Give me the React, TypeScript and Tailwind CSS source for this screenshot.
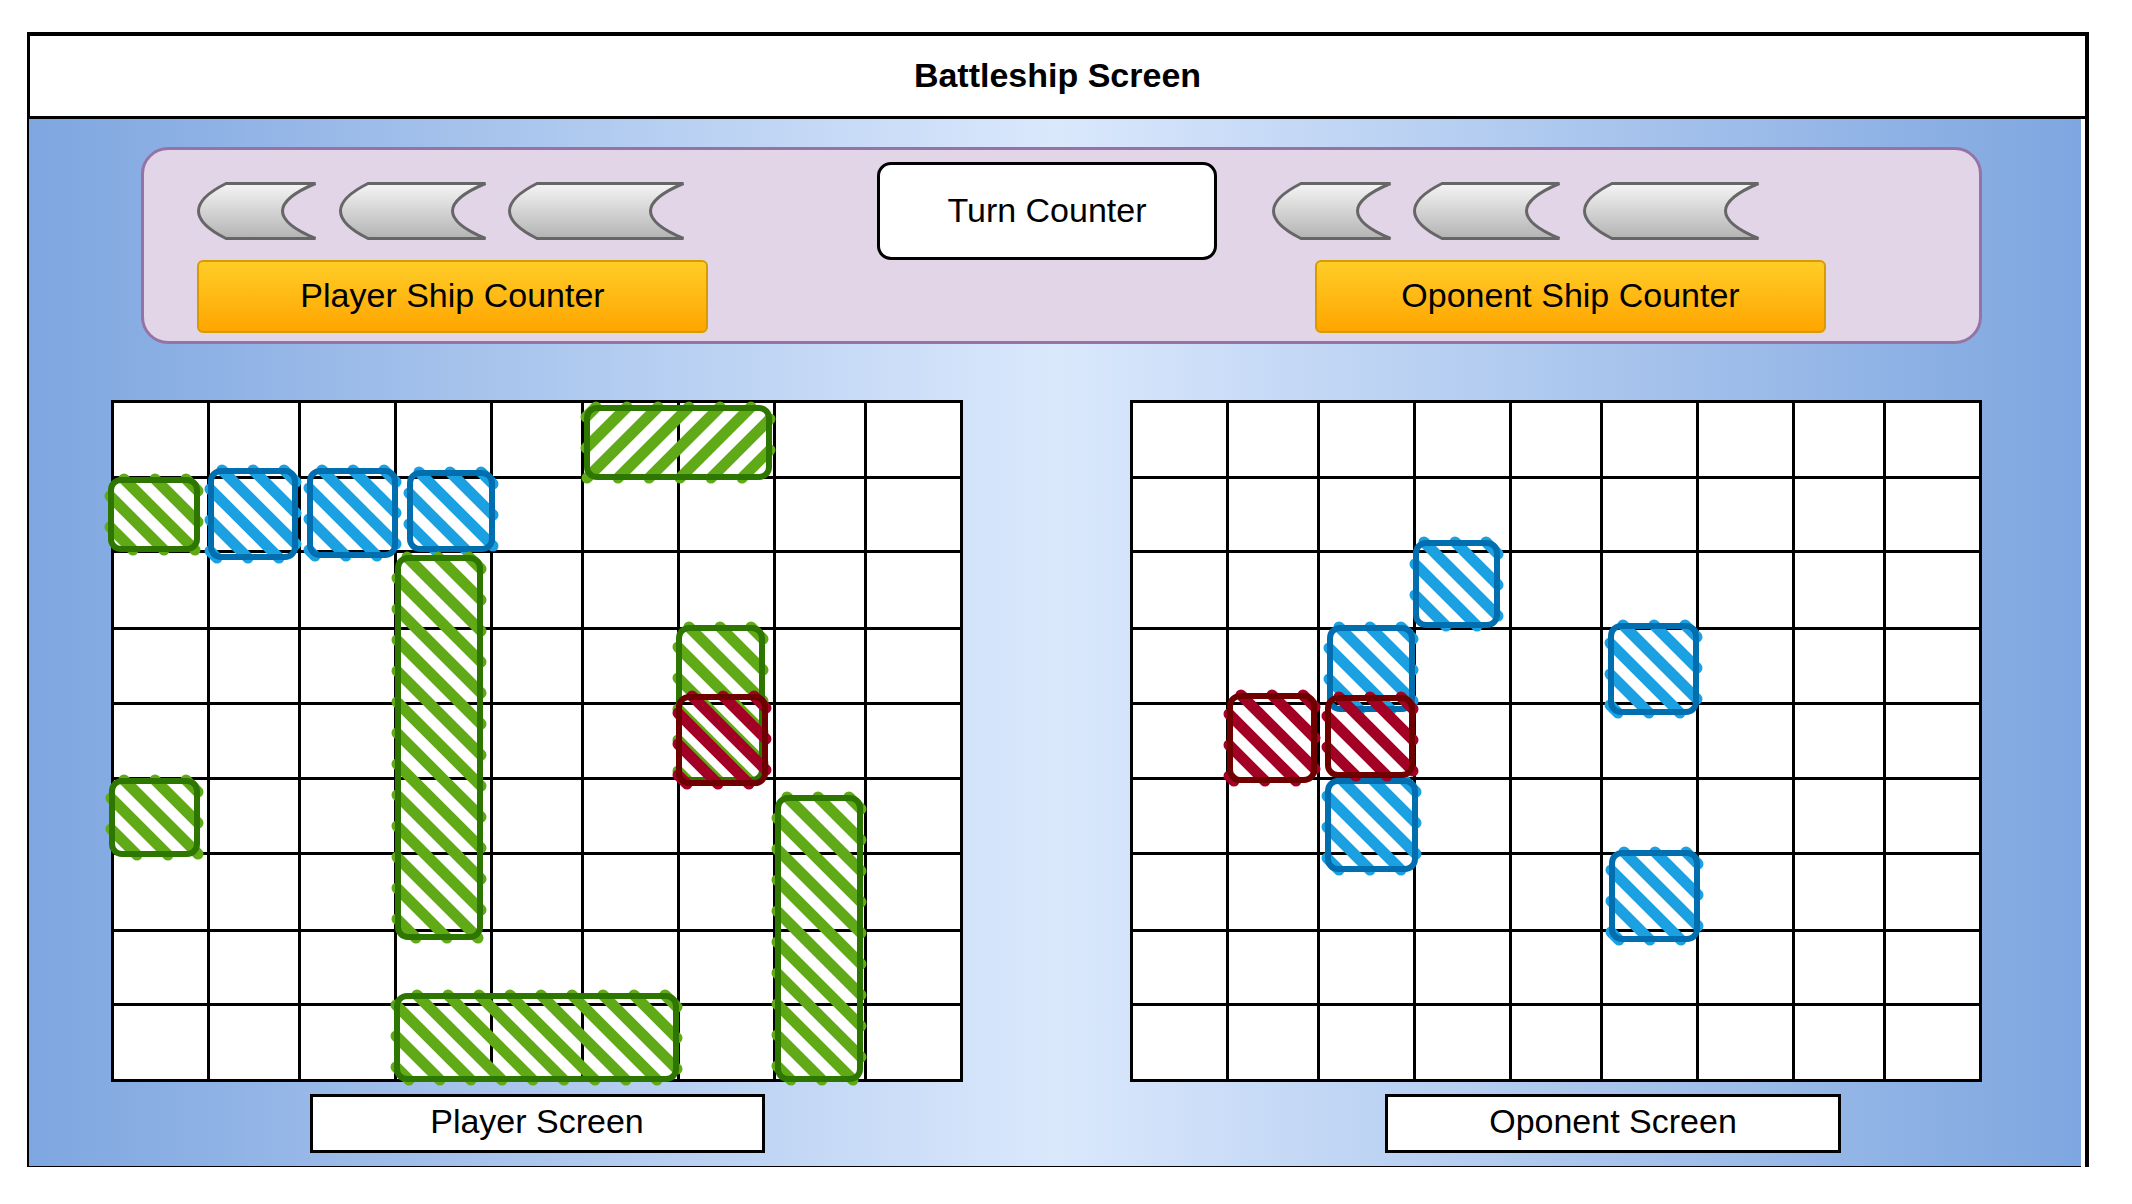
import React, { useId } from "react";

type Mark = { x: number; y: number; w: number; h: number; c: "g" | "b" | "r"; dir?: "f" | "b" };

const COLORS = {
  g: { fill: "#60a917", stroke: "#2d7600" },
  b: { fill: "#1ba1e2", stroke: "#006eaf" },
  r: { fill: "#a20025", stroke: "#6f0000" },
};

const playerMarks: Mark[] = [
  { x: 473, y: 5, w: 188, h: 75, c: "g", dir: "f" },
  { x: -3, y: 77, w: 92, h: 75, c: "g" },
  { x: 97, y: 68, w: 90, h: 92, c: "b" },
  { x: 196, y: 68, w: 91, h: 90, c: "b" },
  { x: 296, y: 70, w: 88, h: 82, c: "b" },
  { x: 284, y: 155, w: 88, h: 385, c: "g" },
  { x: 565, y: 225, w: 89, h: 158, c: "g" },
  { x: 565, y: 294, w: 92, h: 92, c: "r" },
  { x: -2, y: 378, w: 91, h: 79, c: "g" },
  { x: 664, y: 395, w: 88, h: 287, c: "g" },
  { x: 283, y: 593, w: 285, h: 89, c: "g" },
];

const opponentMarks: Mark[] = [
  { x: 283, y: 140, w: 87, h: 88, c: "b" },
  { x: 197, y: 225, w: 88, h: 87, c: "b" },
  { x: 478, y: 223, w: 91, h: 92, c: "b" },
  { x: 195, y: 378, w: 93, h: 94, c: "b" },
  { x: 97, y: 293, w: 90, h: 90, c: "r" },
  { x: 195, y: 295, w: 90, h: 83, c: "r" },
  { x: 479, y: 450, w: 91, h: 92, c: "b" },
];

function Hatch({ m }: { m: Mark }) {
  const { w, h } = m;
  const col = COLORS[m.c];
  const step = 31;
  const ins = 2;
  const iw = w - ins * 2;
  const ih = h - ins * 2;
  const lines: number[][] = [];
  if (m.dir === "f") {
    for (let c = 10; c < iw + ih; c += step) {
      const x1 = Math.max(0, c - ih);
      const x2 = Math.min(iw, c);
      if (x2 - x1 > 3) lines.push([x1 + ins, c - x1 + ins, x2 + ins, c - x2 + ins]);
    }
  } else {
    for (let c = -iw + 12; c < ih; c += step) {
      const x1 = Math.max(0, -c);
      const x2 = Math.min(iw, ih - c);
      if (x2 - x1 > 3) lines.push([x1 + ins, x1 + c + ins, x2 + ins, x2 + c + ins]);
    }
  }
  return (
    <svg
      className="absolute overflow-visible"
      style={{ left: m.x, top: m.y }}
      width={w}
      height={h}
    >
      {lines.map((l, i) => (
        <line
          key={i}
          x1={l[0]}
          y1={l[1]}
          x2={l[2]}
          y2={l[3]}
          stroke={col.fill}
          strokeWidth={11}
          strokeLinecap="round"
        />
      ))}
      <rect
        x={3}
        y={3}
        width={w - 6}
        height={h - 6}
        rx={10}
        fill="none"
        stroke={col.stroke}
        strokeWidth={6}
      />
    </svg>
  );
}

function ShipShape({ w }: { w: number }) {
  const id = useId().replace(/:/g, "");
  const h = 58;
  const s = 29;
  const depth = 33;
  const t = 1.5;
  const b = h - 1.5;
  const r = w - 1.5;
  const d = `M ${s} ${t} L ${r} ${t} Q ${r - 2 * depth} ${h / 2} ${r} ${b} L ${s} ${b} Q ${3 - s} ${h / 2} ${s} ${t} Z`;
  return (
    <svg width={w} height={h} className="block shrink-0">
      <defs>
        <linearGradient id={`g${id}`} x1="0" y1="0" x2="0" y2="1">
          <stop offset="0" stopColor="#f5f5f5" />
          <stop offset="1" stopColor="#b3b3b3" />
        </linearGradient>
      </defs>
      <path d={d} fill={`url(#g${id})`} stroke="#666666" strokeWidth={3} strokeLinejoin="miter" />
    </svg>
  );
}

const COLS = [0, 1, 2, 3, 4, 5, 6, 7, 8];

function Board({ marks }: { marks: Mark[] }) {
  return (
    <div className="relative grid grid-cols-[93px_88px_93px_93px_88px_93px_93px_88px_93px] grid-rows-[73px_71px_74px_72px_72px_72px_74px_71px_73px] gap-[3px] p-[3px] bg-black">
      {COLS.flatMap((r) => COLS.map((c) => <div key={`${r}-${c}`} className="bg-white" />))}
      {marks.map((m, i) => (
        <Hatch key={i} m={m} />
      ))}
    </div>
  );
}

function ShipRow({ widths, gaps }: { widths: number[]; gaps: string[] }) {
  return (
    <div className="flex h-[58px]">
      <ShipShape w={widths[0]} />
      <div className={gaps[0]} />
      <ShipShape w={widths[1]} />
      <div className={gaps[1]} />
      <ShipShape w={widths[2]} />
    </div>
  );
}

export default function App() {
  return (
    <div className="w-[2132px] h-[1204px] bg-white pt-[32px] pl-[27px] font-['Liberation_Sans',Arial,sans-serif] text-black">
      <div className="w-[2062px] border-r-4 border-black">
        <div className="h-[87px] border-t-4 border-l-[3px] border-b-[3px] border-black flex items-center justify-center text-[34px] font-bold leading-none pb-[2px]">
          Battleship Screen
        </div>
        <div className="flex">
          <div className="w-[2054px] h-[1048px] border-l-2 border-b border-black bg-[linear-gradient(to_right,#7ea6e0,#dae8fc_50%,#7ea6e0)] flex flex-col">
            <div className="ml-[112px] mt-[28px] w-[1841px] h-[197px] rounded-[27px] border-[3px] border-[#9673a6] bg-[#e1d5e7] flex items-start pl-[53px] pt-[12px]">
              <div className="mt-[20px] w-[511px] flex flex-col">
                <ShipRow widths={[120, 148, 177]} gaps={["w-[22px]", "w-[21px]"]} />
                <div className="mt-[20px] h-[73px] rounded-[6px] border-2 border-[#d79b00] bg-[linear-gradient(to_bottom,#ffcd28,#ffa500)] flex items-center justify-center text-[34px] leading-none pb-[4px]">
                  Player Ship Counter
                </div>
              </div>
              <div className="ml-[169px] w-[340px] h-[98px] rounded-[14px] border-[3px] border-black bg-white flex items-center justify-center text-[34px] leading-none pb-[3px]">
                Turn Counter
              </div>
              <div className="ml-[55px] mt-[20px] w-[554px] flex flex-col">
                <ShipRow widths={[120, 148, 177]} gaps={["w-[21px]", "w-[22px]"]} />
                <div className="ml-[43px] mt-[20px] w-[511px] h-[73px] rounded-[6px] border-2 border-[#d79b00] bg-[linear-gradient(to_bottom,#ffcd28,#ffa500)] flex items-center justify-center text-[34px] leading-none pb-[4px]">
                  Oponent Ship Counter
                </div>
              </div>
            </div>
            <div className="mt-[56px] flex items-start">
              <div className="ml-[82px] w-[852px] flex flex-col items-center">
                <Board marks={playerMarks} />
                <div className="mt-[12px] w-[455px] h-[59px] border-[3px] border-black bg-white flex items-center justify-center text-[34px] leading-none pb-[6px]">
                  Player Screen
                </div>
              </div>
              <div className="ml-[167px] w-[852px] flex flex-col">
                <Board marks={opponentMarks} />
                <div className="ml-[255px] mt-[12px] w-[456px] h-[59px] border-[3px] border-black bg-white flex items-center justify-center text-[34px] leading-none pb-[6px]">
                  Oponent Screen
                </div>
              </div>
            </div>
          </div>
          <div className="w-[4px] bg-white" />
        </div>
      </div>
    </div>
  );
}
